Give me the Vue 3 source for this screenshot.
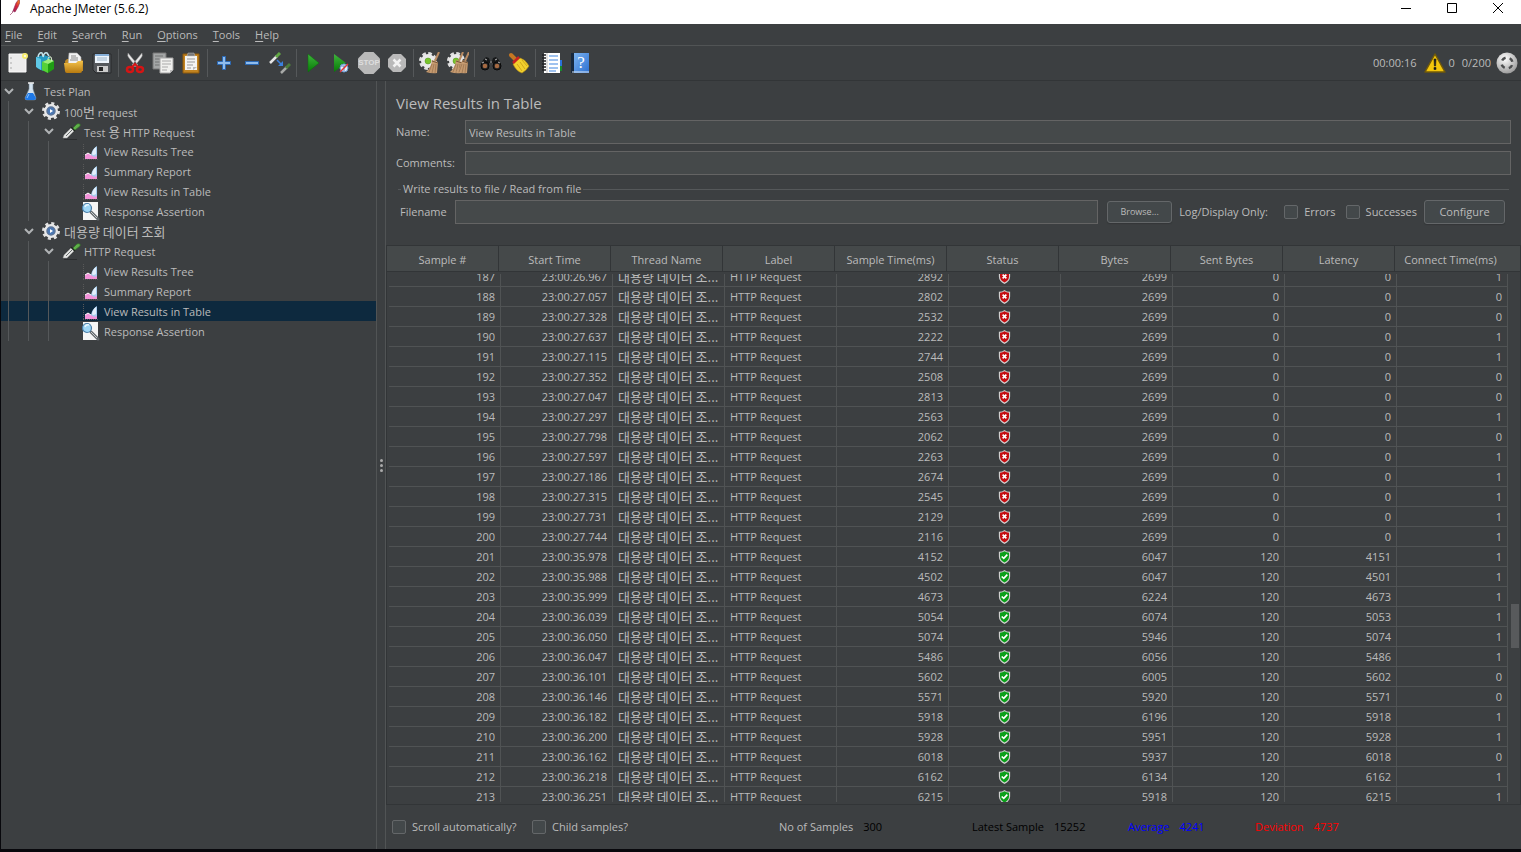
<script setup>
import { ref } from 'vue'

const menus = ['File', 'Edit', 'Search', 'Run', 'Options', 'Tools', 'Help']

const toolGroups = [
  [['new', 'New'], ['templates', 'Templates'], ['open', 'Open'], ['save', 'Save']],
  [['cut', 'Cut'], ['copy', 'Copy'], ['paste', 'Paste']],
  [['plus', 'Expand all'], ['minus', 'Collapse all'], ['toggle', 'Toggle']],
  [['start', 'Start'], ['startnt', 'Start no pauses'], ['stop', 'Stop', 'STOP'], ['shutdown', 'Shutdown']],
  [['clear', 'Clear'], ['clearall', 'Clear all']],
  [['find', 'Search'], ['broom', 'Reset search']],
  [['func', 'Function helper'], ['help', 'Help', '?']],
]

const tree = [
  { depth: 0, icon: 'flask', parts: [['Test Plan']] },
  { depth: 1, icon: 'gear', parts: [['100'], ['번', 'ko'], [' request']] },
  { depth: 2, icon: 'pipette', parts: [['Test '], ['용', 'ko'], [' HTTP Request']] },
  { depth: 3, icon: 'chart', parts: [['View Results Tree']] },
  { depth: 3, icon: 'chart', parts: [['Summary Report']] },
  { depth: 3, icon: 'chart', parts: [['View Results in Table']] },
  { depth: 3, icon: 'assert', parts: [['Response Assertion']] },
  { depth: 1, icon: 'gear', parts: [['대용량 데이터 조회', 'ko']] },
  { depth: 2, icon: 'pipette', parts: [['HTTP Request']] },
  { depth: 3, icon: 'chart', parts: [['View Results Tree']] },
  { depth: 3, icon: 'chart', parts: [['Summary Report']] },
  { depth: 3, icon: 'chart', parts: [['View Results in Table']], selected: true },
  { depth: 3, icon: 'assert', parts: [['Response Assertion']] },
]

const columns = ['Sample #', 'Start Time', 'Thread Name', 'Label', 'Sample Time(ms)', 'Status', 'Bytes', 'Sent Bytes', 'Latency', 'Connect Time(ms)']

// start time, sample time, bytes, sent bytes, latency, connect time
const samples = [
  ['26.967', 2892, 2699, 0, 0, 1],
  ['27.057', 2802, 2699, 0, 0, 0],
  ['27.328', 2532, 2699, 0, 0, 0],
  ['27.637', 2222, 2699, 0, 0, 1],
  ['27.115', 2744, 2699, 0, 0, 1],
  ['27.352', 2508, 2699, 0, 0, 0],
  ['27.047', 2813, 2699, 0, 0, 0],
  ['27.297', 2563, 2699, 0, 0, 1],
  ['27.798', 2062, 2699, 0, 0, 0],
  ['27.597', 2263, 2699, 0, 0, 1],
  ['27.186', 2674, 2699, 0, 0, 1],
  ['27.315', 2545, 2699, 0, 0, 1],
  ['27.731', 2129, 2699, 0, 0, 1],
  ['27.744', 2116, 2699, 0, 0, 1],
  ['35.978', 4152, 6047, 120, 4151, 1],
  ['35.988', 4502, 6047, 120, 4501, 1],
  ['35.999', 4673, 6224, 120, 4673, 1],
  ['36.039', 5054, 6074, 120, 5053, 1],
  ['36.050', 5074, 5946, 120, 5074, 1],
  ['36.047', 5486, 6056, 120, 5486, 1],
  ['36.101', 5602, 6005, 120, 5602, 0],
  ['36.146', 5571, 5920, 120, 5571, 0],
  ['36.182', 5918, 6196, 120, 5918, 1],
  ['36.200', 5928, 5951, 120, 5928, 1],
  ['36.162', 6018, 5937, 120, 6018, 0],
  ['36.218', 6162, 6134, 120, 6162, 1],
  ['36.251', 6215, 5918, 120, 6215, 1],
].map((s, i) => ({ no: 187 + i, start: '23:00:' + s[0], time: s[1], bytes: s[2], sent: s[3], latency: s[4], connect: s[5] }))

const name = ref('View Results in Table')
const comments = ref('')
const filename = ref('')
</script>

<template>
  <div class="desktop">
    <svg class="sprite" aria-hidden="true">
      <defs>
        <linearGradient id="gGreen" x1="0" y1="0" x2="0" y2="1"><stop offset="0" stop-color="#3fb53c" /><stop offset="1" stop-color="#067a06" /></linearGradient>
        <linearGradient id="gGold" x1="0" y1="0" x2="0" y2="1"><stop offset="0" stop-color="#f2c14a" /><stop offset="1" stop-color="#b87a10" /></linearGradient>
        <linearGradient id="gBlue" x1="0" y1="0" x2="1" y2="1"><stop offset="0" stop-color="#7db4f0" /><stop offset="1" stop-color="#2b6fd0" /></linearGradient>
        <linearGradient id="gFeather" x1="1" y1="0" x2="0" y2="1"><stop offset="0" stop-color="#f6a21c" /><stop offset=".4" stop-color="#d6243a" /><stop offset="1" stop-color="#6b2070" /></linearGradient>
        <radialGradient id="gBall" cx=".4" cy=".3" r=".8"><stop offset="0" stop-color="#fff" /><stop offset="1" stop-color="#909090" /></radialGradient>
      </defs>
      <symbol id="new" viewBox="0 0 22 22">
        <path d="M2 2h17v18H2z" fill="#ececec" stroke="#fafafa" />
        <path d="M4 5v2M4 10v2M4 15v2" stroke="#aaa" /><circle cx="18" cy="4" r="3" fill="#f5ec70" /><circle cx="18" cy="4" r="1" fill="#fff" />
      </symbol>
      <symbol id="templates" viewBox="0 0 22 22">
        <path d="M1 5l8-2 6 2v10l-7 4-6-3z" fill="#249bc4" /><path d="M1 5l5 2v11l-5-3z" fill="#5fc8e6" />
        <path d="M3 5q1-5 4-4l1 3M8 5q1-5 4-4l2 3" fill="none" stroke="#c4e4ec" stroke-width="1.500" />
        <path d="M7 10l7-3 5 2v8l-6 4-6-3z" fill="#1f9d14" /><path d="M7 10l6 2v9l-6-3z" fill="#55d238" /><path d="M7 10l7-3 5 2-6 3z" fill="#9aee78" />
        <path d="M13 8q0-4 3-3l1 4" fill="none" stroke="#dff5d6" />
      </symbol>
      <symbol id="open" viewBox="0 0 22 22">
        <path d="M2 9l2-2h14l2 2v10H3z" fill="#c18a22" /><path d="M6 1h8l4 4v9H5z" fill="#f2f2f2" stroke="#aaa" stroke-width=".6" />
        <path d="M8 4h5M8 6h7M7 8h8" stroke="#8a8a8a" /><path d="M1 11h12l2-2h5l-1 10q0 2-2 2H4q-2 0-2-2z" fill="url(#gGold)" />
      </symbol>
      <symbol id="save" viewBox="0 0 22 22">
        <path d="M2 2h18v19H5l-3-3z" fill="#55585c" stroke="#292b2d" /><path d="M4 2h14v9H4z" fill="#edf4fb" /><path d="M4 2h14v2H4z" fill="#86afd8" />
        <path d="M6 6h10M6 8h10" stroke="#9db4c8" /><path d="M6 14h11v6H6z" fill="#ccc" /><path d="M8 15h4v4H8z" fill="#252525" />
      </symbol>
      <symbol id="cut" viewBox="0 0 22 22">
        <path d="M4 1q-1 3 1 5l7 9 2-2zM18 1q1 3-1 5l-7 9-2-2z" fill="#e9e9e9" stroke="#8b8b8b" stroke-width=".5" />
        <ellipse cx="6" cy="17.500" rx="3" ry="2.500" fill="none" stroke="#d51414" stroke-width="2.500" /><ellipse cx="16" cy="17.500" rx="3" ry="2.500" fill="none" stroke="#d51414" stroke-width="2.500" />
        <path d="M8 15l3-3 3 3" stroke="#d51414" stroke-width="2" fill="none" />
      </symbol>
      <symbol id="copy" viewBox="0 0 22 22">
        <path d="M1 1h13v16H1z" fill="#a4a6a6" stroke="#777" /><path d="M3 4h8M3 7h8M3 10h5M3 13h5" stroke="#737575" />
        <path d="M8 6h13v12l-3 3H8z" fill="#f0f0ee" stroke="#a6a6a6" /><path d="M10 9h9M10 12h9M10 15h6M10 18h5" stroke="#aaa" /><path d="M18 21v-3h3" fill="#bbb" />
      </symbol>
      <symbol id="paste" viewBox="0 0 22 22">
        <path d="M3 2h16v19H3z" fill="#c28421" stroke="#8f5a0c" /><path d="M5 4h12v14H5z" fill="#f4f4f2" /><path d="M7 4l1-3h6l1 3z" fill="#777" stroke="#bbb" stroke-width=".5" />
        <path d="M7 7h8M7 10h8M7 13h6M7 16h4" stroke="#999" /><path d="M13 18v-3h4z" fill="#bbb" />
      </symbol>
      <symbol id="plus" viewBox="0 0 22 22"><path d="M9.500 4.500h3v5h5v3h-5v5h-3v-5h-5v-3h5z" fill="#8fbcec" stroke="#2a68b4" /></symbol>
      <symbol id="minus" viewBox="0 0 22 22"><path d="M4.500 9.500h13v3h-13z" fill="#8fbcec" stroke="#2a68b4" /></symbol>
      <symbol id="toggle" viewBox="0 0 22 22">
        <path d="M1 11l7-7" stroke="#e6e6e6" stroke-width="2.500" /><path d="M7 5l4-4" stroke="#62a744" stroke-width="3" />
        <path d="M8 8l5 5" stroke="#3a80de" stroke-width="1.500" /><path d="M14 9v5H9z" fill="#3a80de" />
        <path d="M12 21l6-6" stroke="#a8aaa8" stroke-width="2.500" /><path d="M17 16l4-4" stroke="#4c7d3a" stroke-width="3" />
      </symbol>
      <symbol id="start" viewBox="0 0 22 22"><path d="M6 2l11 9-11 9z" fill="url(#gGreen)" stroke="#0c6c0c" stroke-width=".5" /></symbol>
      <symbol id="startnt" viewBox="0 0 22 22">
        <path d="M4 2l12 9-12 9z" fill="url(#gGreen)" /><circle cx="14" cy="16" r="4" fill="#e8eef6" stroke="#6699d2" /><path d="M11 14h5M14 14v5" stroke="#5c8cca" /><path d="M10 20l8-8" stroke="#e23434" stroke-width="1.500" />
      </symbol>
      <symbol id="stop" viewBox="0 0 22 22"><path d="M6.500 0h9L22 6.500v9L15.500 22h-9L0 15.500v-9z" fill="#b9b9b9" /></symbol>
      <symbol id="shutdown" viewBox="0 0 22 22">
        <path d="M7 2h8l5 5v8l-5 5H7l-5-5V7z" fill="#b9b9b9" /><path d="M7.500 7.500l7 7M14.500 7.500l-7 7" stroke="#f2f2f2" stroke-width="2.500" />
      </symbol>
      <symbol id="brush" viewBox="0 0 22 22">
        <path d="M20 0l-4 9" stroke="#b98b62" stroke-width="2" /><path d="M13 8l6 2-1 11q-5 1-11-1 5-4 6-12z" fill="#c59a70" /><path d="M13 12l-3 8M15 12l-2 9M17 12l-1 9" stroke="#94704c" stroke-width=".7" /><path d="M13 9l6 2" stroke="#7a583a" />
      </symbol>
      <symbol id="cog" viewBox="0 0 22 22">
        <circle cx="9" cy="9" r="7.500" fill="none" stroke="#dfdfdf" stroke-width="3" stroke-dasharray="3.600 2.290" /><circle cx="9" cy="9" r="7" fill="#e9e9e9" /><circle cx="9" cy="9" r="3" fill="#78c52c" stroke="#4f8d1a" stroke-width=".5" />
      </symbol>
      <symbol id="clear" viewBox="0 0 22 22"><use href="#cog" /><use href="#brush" /></symbol>
      <symbol id="clearall" viewBox="0 0 22 22"><use href="#cog" /><use href="#brush" x="-4" /><use href="#brush" x="2" /></symbol>
      <symbol id="find" viewBox="0 0 22 22">
        <path d="M3 8l3-3 3 1 1 3h2l1-3 3-1 3 3 2 6h-7l-1-3h-4l-1 3H1z" fill="#17191a" /><circle cx="5" cy="14" r="4" fill="#222" stroke="#080808" /><circle cx="17" cy="14" r="4" fill="#222" stroke="#080808" />
        <circle cx="5" cy="14" r="2.300" fill="#a66a42" /><circle cx="17" cy="14" r="2.300" fill="#a66a42" /><path d="M5 7l2 1M15 8l2-1M10 10h2M2 11l2-1M18 10l2 1" stroke="#b5b5b5" />
      </symbol>
      <symbol id="broom" viewBox="0 0 22 22">
        <path d="M3 3l5 5" stroke="#c57722" stroke-width="4" stroke-linecap="round" /><path d="M5 12l7-6q5 1 9 8-3 5-7 7-6-2-9-9z" fill="#f3d12d" stroke="#b58b12" stroke-width=".6" />
        <path d="M9 12l5 7M12 10l5 7M14 8l5 6" stroke="#c89d17" stroke-width=".8" /><path d="M5 11l6-6" stroke="#c82222" stroke-width="2.500" />
      </symbol>
      <symbol id="func" viewBox="0 0 22 22">
        <path d="M18 8h3v6h-3z" fill="#2b72d8" /><path d="M18 14h3v5h-3z" fill="#17892c" /><path d="M3 1h16v20H3z" fill="#fff" /><path d="M8 4h9M8 8h9M8 12h9M8 16h9M8 19h7" stroke="#4186e0" stroke-width="1.200" />
        <path d="M1 3h4M1 6h4M1 9h4M1 12h4M1 15h4M1 18h4" stroke="#202224" stroke-width="1.500" /><path d="M6 1v20" stroke="#aaa" stroke-width=".7" />
      </symbol>
      <symbol id="help" viewBox="0 0 22 22">
        <path d="M2 1h3v20H2z" fill="#17283d" /><path d="M5 1h15v20H5z" fill="url(#gBlue)" /><path d="M3 20h17" stroke="#dce8f6" />
      </symbol>
      <symbol id="flask" viewBox="0 0 20 20">
        <path d="M8 2h4v6l3 9q0 2-2 2H6q-2 0-2-2l4-9z" fill="#d4e3ef" stroke="#708496" stroke-width=".6" /><path d="M7 12h5l3 5q0 2-2 2H6q-2 0-2-2z" fill="#1e78e6" /><path d="M7 2h6" stroke="#eee" stroke-width="1.500" /><path d="M8 13l-2 4" stroke="#8cc6ff" />
      </symbol>
      <symbol id="gear" viewBox="0 0 20 20">
        <circle cx="10" cy="10" r="7.500" fill="none" stroke="#e0e0e0" stroke-width="3" stroke-dasharray="3 2.890" /><circle cx="10" cy="10" r="7" fill="#e8e8e8" /><circle cx="10" cy="10" r="4" fill="#4a78b4" stroke="#5c7599" stroke-width="1.500" /><path d="M9 8l3 2-3 2z" fill="#fff" />
      </symbol>
      <symbol id="pipette" viewBox="0 0 20 20">
        <path d="M2 17l1-3 7-7 3 3-7 7z" fill="#e3e5e3" stroke="#999" stroke-width=".5" /><path d="M5 15l6-6" stroke="#6a6e6f" /><path d="M10 6l4 4" stroke="#202820" stroke-width="1.500" /><path d="M12 7l4-4q4-1 3 2l-5 4z" fill="#5fb04a" stroke="#347526" stroke-width=".7" /><path d="M3 18.500h13" stroke="#2b2d2f" />
      </symbol>
      <symbol id="chart" viewBox="0 0 20 20">
        <path d="M2.500 3v16M2 18.500h15" stroke="#595959" stroke-dasharray="1 1" /><path d="M4 18v-4l3-2 3 2 4-3 2 2v5z" fill="#f393d9" /><path d="M4 14l3-2 3 2" stroke="#fff" fill="none" /><path d="M16 5v10q-3 2-6-1 1-6 6-9z" fill="#a7cdee" /><path d="M15 6v7q-3 2-4 0 1-5 4-7z" fill="#e4f0fb" />
      </symbol>
      <symbol id="assert" viewBox="0 0 20 20">
        <path d="M2 1h15v18H2z" fill="#f5f5f5" /><path d="M10 11l7 7" stroke="#62676b" stroke-width="3" stroke-linecap="round" /><path d="M10 11l6 6" stroke="#c8ccce" /><circle cx="6" cy="7" r="4.500" fill="#9ed6f6" stroke="#4a7ea8" stroke-width="1.200" /><path d="M4 6q1-3 4-2" stroke="#e7f7ff" fill="none" stroke-width="1.500" />
      </symbol>
      <symbol id="bad" viewBox="0 0 16 16">
        <path d="M8 1q2 2 6 2v5q0 5-6 8-6-3-6-8V3q4 0 6-2z" fill="#d0d0d0" /><path d="M8 2.500q2 1.500 4.800 1.600V8q0 4-4.800 6.500Q3.200 12 3.200 8V4.100Q6 4 8 2.500z" fill="#c50d12" /><path d="M6 6l4 4M10 6l-4 4" stroke="#fff" stroke-width="1.700" />
      </symbol>
      <symbol id="good" viewBox="0 0 16 16">
        <path d="M8 1q2 2 6 2v5q0 5-6 8-6-3-6-8V3q4 0 6-2z" fill="#d0d0d0" /><path d="M8 2.500q2 1.500 4.800 1.600V8q0 4-4.800 6.500Q3.200 12 3.200 8V4.100Q6 4 8 2.500z" fill="#0aa01a" /><path d="M5 8l2.200 2L11 6" fill="none" stroke="#fff" stroke-width="1.700" />
      </symbol>
    </svg>

    <div class="window">
      <header class="titlebar">
        <svg class="feather" viewBox="0 0 10 16"><path d="M3 11l3-8 3-4 1 3-2 5-3 5zM2 12l1-1M0 15l3-3" fill="url(#gFeather)" stroke="#8a2050" stroke-width=".6" /></svg>
        <span class="app-title">Apache JMeter (5.6.2)</span>
        <button class="win-btn" aria-label="Minimize"><svg viewBox="0 0 12 12"><path d="M1 6.500h10" /></svg></button>
        <button class="win-btn" aria-label="Maximize"><svg viewBox="0 0 12 12"><path d="M1.500 1.500h9v9h-9z" /></svg></button>
        <button class="win-btn" aria-label="Close"><svg viewBox="0 0 12 12"><path d="M1 1l10 10M11 1L1 11" /></svg></button>
      </header>

      <nav class="menubar">
        <button v-for="m in menus" :key="m"><u>{{ m[0] }}</u>{{ m.slice(1) }}</button>
      </nav>

      <div class="toolbar">
        <div v-for="(g, i) in toolGroups" :key="i" class="tool-group">
          <button v-for="t in g" :key="t[0]" :aria-label="t[1]">
            <svg><use :href="'#' + t[0]" /></svg>
            <span v-if="t[2]" :class="t[0] + '-text'">{{ t[2] }}</span>
          </button>
        </div>
        <div class="run-state">
          <span>00:00:16</span>
          <svg class="warn" viewBox="0 0 22 20"><path d="M11 1l10 18H1z" fill="#f4c60b" stroke="#70590a" stroke-width="1.500" stroke-linejoin="round" /><path d="M10 6h2l-.4 7h-1.200zM10 14.500h2v2h-2z" fill="#1b1b1b" stroke="#1b1b1b" stroke-width=".6" /></svg>
          <span class="errors">0</span>
          <span>0/200</span>
          <svg class="ball" viewBox="0 0 22 22"><circle cx="11" cy="11" r="10.500" fill="url(#gBall)" /><circle cx="11" cy="11" r="5.500" fill="none" stroke="#4c4e4f" stroke-width="2.500" stroke-dasharray="4.300 4.340" stroke-dashoffset="-2.200" /></svg>
        </div>
      </div>

      <main class="workspace">
        <ul class="tree">
          <li v-for="(n, i) in tree" :key="i" :class="{ selected: n.selected }">
            <i v-for="d in n.depth" :key="d" class="guide"></i>
            <span class="twist"><svg v-if="n.depth < 3" viewBox="0 0 10 8"><path d="M1 2l4 4 4-4" /></svg></span>
            <svg class="node-icon"><use :href="'#' + n.icon" /></svg>
            <span class="node-label"><span v-for="(p, k) in n.parts" :key="k" :class="p[1]">{{ p[0] }}</span></span>
          </li>
        </ul>

        <div class="splitter"><i></i><i></i><i></i></div>

        <section class="panel">
          <form class="config" @submit.prevent>
            <h1>View Results in Table</h1>
            <div class="field">
              <label for="name">Name:</label><input id="name" v-model="name" type="text">
            </div>
            <div class="field">
              <label for="comments">Comments:</label><input id="comments" v-model="comments" type="text">
            </div>
            <div class="group-title"><span>Write results to file / Read from file</span></div>
            <div class="file-row">
              <label for="filename">Filename</label>
              <input id="filename" v-model="filename" type="text">
              <button class="browse" type="button">Browse...</button>
              <span class="log-label">Log/Display Only:</span>
              <label class="check"><input type="checkbox">Errors</label>
              <label class="check"><input type="checkbox">Successes</label>
              <button class="configure" type="button">Configure</button>
            </div>
          </form>

          <div class="results">
            <table>
              <thead>
                <tr><th v-for="c in columns" :key="c">{{ c }}</th></tr>
              </thead>
              <tbody>
                <tr v-for="s in samples" :key="s.no">
                  <td>{{ s.no }}</td>
                  <td>{{ s.start }}</td>
                  <td class="text ko">대용량 데이터 조...</td>
                  <td class="text">HTTP Request</td>
                  <td>{{ s.time }}</td>
                  <td class="status"><svg role="img" :aria-label="s.sent ? 'Success' : 'Failure'"><use :href="s.sent ? '#good' : '#bad'" /></svg></td>
                  <td>{{ s.bytes }}</td>
                  <td>{{ s.sent }}</td>
                  <td>{{ s.latency }}</td>
                  <td>{{ s.connect }}</td>
                </tr>
              </tbody>
            </table>
            <div class="thumb"></div>
          </div>

          <footer class="summary">
            <label class="check"><input type="checkbox">Scroll automatically?</label>
            <label class="check"><input type="checkbox">Child samples?</label>
            <div class="stats">
              <span>No of Samples<b class="black">300</b></span>
              <span class="black">Latest Sample<b>15252</b></span>
              <span class="blue">Average<b>4241</b></span>
              <span class="red">Deviation<b>4737</b></span>
            </div>
          </footer>
        </section>
      </main>
    </div>
  </div>
</template>

<style>
body { background: #08080c; }
</style>

<style scoped>
* { box-sizing: border-box; }
.desktop {
  height: 100vh;
  padding: 0 0 3px 1px;
  background: #08080c;
  color: #bbb;
  font: 11px/16px "Open Sans", "Noto Sans CJK KR", sans-serif;
  overflow: hidden;
}
.sprite { position: absolute; width: 0; height: 0; }
.window { display: flex; flex-direction: column; height: 100%; background: #3c3f41; }
button { border: 0; padding: 0; background: none; color: inherit; font: inherit; }
svg { display: block; flex: none; }
.ko { font-family: "Noto Sans CJK KR", sans-serif; font-size: 13px; }

.titlebar { display: flex; align-items: center; height: 24px; padding: 0 0 8px 9px; background: #fff; color: #000; }
.feather { width: 10px; height: 16px; margin-right: 10px; }
.app-title { flex: 1; padding-top: 1px; font-size: 12px; }
.win-btn { display: grid; place-items: center; width: 46px; height: 16px; }
.win-btn svg { width: 12px; height: 12px; fill: none; stroke: #000; }

.menubar { display: flex; gap: 15px; height: 22px; padding: 0 4px; border-bottom: 1px solid #515455; }
u { text-underline-offset: 2px; }

.toolbar { display: flex; align-items: center; height: 35px; padding: 0 3px; border-bottom: 1px solid #323537; }
.tool-group { display: flex; }
.tool-group button { display: grid; place-items: center; width: 28px; height: 28px; }
.tool-group button > * { grid-area: 1 / 1; }
.tool-group svg { width: 22px; height: 22px; }
.tool-group + .tool-group { padding-left: 2px; margin-left: 2px; border-left: 1px solid #55585a; }
.stop-text { color: #dedede; font: bold 8px/10px "Liberation Sans", sans-serif; }
.help-text { padding-left: 2px; color: #fff; font: 17px/20px "Liberation Serif", serif; }
.run-state { display: flex; align-items: center; gap: 7px; margin-left: auto; }
.warn { width: 22px; height: 20px; }
.errors { margin-left: -4px; }
.ball { width: 22px; height: 22px; margin-left: -2px; }

.workspace { display: flex; flex: 1; min-height: 0; }
.tree { width: 376px; margin: 0; padding: 0; list-style: none; border-right: 1px solid #515455; }
.tree li { display: flex; align-items: center; height: 20px; }
.tree .selected { background: #0d293e; }
.guide { width: 20px; height: 20px; padding-left: 7px; }
.guide::before { content: ""; display: block; width: 1px; height: 20px; background: #55585a; }
.twist { width: 20px; padding-left: 3px; }
.twist svg { width: 10px; height: 8px; fill: none; stroke: #b0b3b5; stroke-width: 2; }
.node-icon { width: 20px; height: 20px; }
.node-label { display: flex; align-items: baseline; height: 20px; margin-left: 3px; line-height: 21px; white-space: pre; }
.splitter { display: flex; flex-direction: column; align-items: center; justify-content: center; gap: 2px; width: 9px; border-right: 1px solid #515455; }
.splitter i { width: 3px; height: 3px; border-radius: 50%; background: #aaa; }

.panel { display: flex; flex-direction: column; flex: 1; min-width: 0; }
.config { padding: 0 10px 21px; }
h1 { margin: 12px 0 7px; font-size: 15px; line-height: 20px; font-weight: 400; }
.field { display: flex; align-items: center; margin-bottom: 7px; }
.field label { width: 69px; }
input[type="text"] { flex: 1; min-width: 0; height: 24px; padding: 0 3px; border: 1px solid #646464; border-radius: 0; background: #45494a; color: #bbb; font: inherit; outline: 0; }
.group-title { display: flex; align-items: center; gap: 2px; height: 14px; padding: 0 2px; }
.group-title::before { content: ""; width: 3px; height: 1px; background: #55585a; }
.group-title::after { content: ""; flex: 1; height: 1px; background: #55585a; }
.file-row { display: flex; align-items: center; padding: 4px 6px 0 4px; }
.file-row > label:first-child { width: 55px; }
.browse, .configure { border: 1px solid #646769; border-radius: 3px; background: #43484a; box-shadow: 0 1px 1px #333638; }
.browse { width: 65px; height: 22px; margin: 0 7px 0 9px; font-size: 9px; }
.configure { width: 81px; height: 24px; }
.log-label { width: 105px; white-space: nowrap; }
.check { display: flex; align-items: center; gap: 6px; white-space: nowrap; }
.check input { appearance: none; width: 14px; height: 14px; margin: 0; border: 1px solid #646769; border-radius: 2px; background: #43484a; }
.file-row .check { margin-right: 7px; }
.file-row .check + .check { margin-left: 3px; }

.results { position: relative; flex: 1; min-height: 0; border: 1px solid #323537; padding-bottom: 2px; }
table { display: flex; flex-direction: column; height: 100%; }
thead { flex: none; border-bottom: 1px solid #323537; margin-bottom: 2px; background: #45494a; }
tbody { display: block; flex: 1; min-height: 0; overflow: hidden; padding: 0 12px 0 2px; }
thead, thead tr { display: grid; }
thead tr { grid-template-columns: repeat(9, minmax(0, 112fr)) minmax(0, 125fr); height: 25px; }
th { padding: 2px 0 0; border-right: 1px solid #323537; font-weight: 400; line-height: 23px; }
th:last-child { padding-right: 14px; border-right: 0; }
tbody tr { display: grid; grid-template-columns: repeat(9, minmax(0, 112fr)) minmax(0, 111fr); height: 20px; }
tbody tr:first-child { margin-top: -7px; }
td { height: 20px; padding: 0 5px; border: solid #505354; border-width: 0 1px 1px 0; line-height: 19px; text-align: right; white-space: nowrap; overflow: hidden; }
td.text { text-align: left; }
.status { display: grid; place-items: center; }
.status svg { width: 15px; height: 15px; }
.thumb { position: absolute; right: 1px; top: 67%; width: 8px; height: 44px; margin-top: -16px; background: #585a5c; }

.summary { display: flex; align-items: center; height: 44px; padding-left: 6px; }
.summary .check { width: 140px; }
.stats { display: grid; flex: 1; grid-template-columns: 193fr 156fr 127fr 266fr; margin-left: 107px; white-space: nowrap; }
.stats b { margin-left: 10px; font-weight: 400; }
.black { color: #000; }
.blue { color: #00f; }
.red { color: #f00; }
</style>
